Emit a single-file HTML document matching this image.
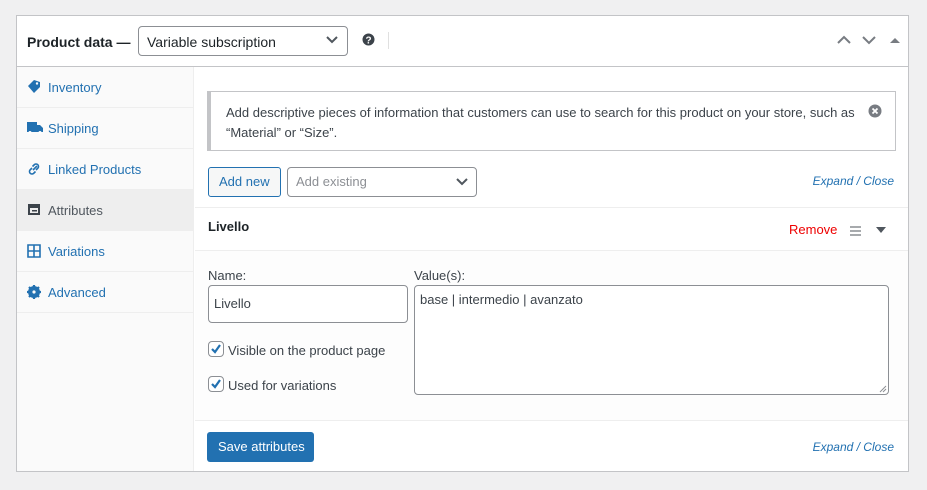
<!DOCTYPE html>
<html><head><meta charset="utf-8"><style>
*{box-sizing:border-box;margin:0;padding:0}
body{width:927px;height:490px;background:#f0f0f1;font-family:"Liberation Sans",sans-serif;font-size:13px;color:#3c434a;position:relative;overflow:hidden}
.a{position:absolute}
.t{position:absolute;white-space:nowrap;line-height:16px}
.box{left:16px;top:15px;width:893px;height:457px;background:#fff;border:1px solid #c3c4c7}
.side{left:17px;top:67px;width:177px;height:404px;background:#fafafa;border-right:1px solid #eee}
.item{position:absolute;left:0;width:177px;height:41px;border-bottom:1px solid #eee;color:#2271b1}
.item span{position:absolute;left:31px;top:13px;line-height:16px}
.item svg{position:absolute;left:10px;top:13px}
.inp{position:absolute;border:1px solid #8c8f94;border-radius:4px;background:#fff}
.cb{position:absolute;width:16px;height:16px;border:1px solid #8c8f94;border-radius:4px;background:#fff}
</style></head><body>
<div class="a box"></div>
<div class="a" style="left:17px;top:66px;width:891px;height:1px;background:#c3c4c7"></div>
<div class="t" style="left:27px;top:34px;font-size:14px;font-weight:bold;color:#1d2327">Product data —</div>
<div class="inp" style="left:138px;top:26px;width:210px;height:30px"></div>
<div class="t" style="left:147px;top:34px;font-size:14px;color:#1d2327">Variable subscription</div>
<svg class="a" style="left:325px;top:35px" width="14" height="10"><path d="M2 2l5 5 5-5" fill="none" stroke="#50575e" stroke-width="2"/></svg>
<svg class="a" style="left:362px;top:33px" width="13" height="13"><circle cx="6.5" cy="6.5" r="6" fill="#3c434a"/><text x="6.5" y="10.5" font-size="10" font-weight="bold" fill="#fff" text-anchor="middle" font-family="Liberation Sans">?</text></svg>
<div class="a" style="left:388px;top:32px;width:1px;height:17px;background:#e0e0e0"></div>
<svg class="a" style="left:836px;top:35px" width="16" height="10"><path d="M2 8l6-6 6 6" fill="none" stroke="#787c82" stroke-width="2"/></svg>
<svg class="a" style="left:861px;top:35px" width="16" height="10"><path d="M2 2l6 6 6-6" fill="none" stroke="#787c82" stroke-width="2"/></svg>
<svg class="a" style="left:890px;top:37px" width="10" height="7"><path d="M0 6l5-5 5 5z" fill="#787c82"/></svg>

<div class="a side">
 <div class="item" style="top:0"><svg width="14" height="14"><path d="M1 6l6-6 6 2 0 5-6 6z" fill="#2271b1"/><circle cx="10" cy="3.5" r="1.2" fill="#fafafa"/></svg><span>Inventory</span></div>
 <div class="item" style="top:41px"><svg width="16" height="14"><path d="M0 1h10v10H0zM10 4h3l3 3v4h-6z" fill="#2271b1"/><circle cx="3" cy="11.5" r="1.5" fill="#fff"/><circle cx="13" cy="11.5" r="1.5" fill="#fff"/></svg><span>Shipping</span></div>
 <div class="item" style="top:82px"><svg width="14" height="14"><path d="M6 8l4-4M5 6l-2 2a2.5 2.5 0 003.5 3.5l2-2M9 8l2-2A2.5 2.5 0 007.5 2.5l-2 2" fill="none" stroke="#2271b1" stroke-width="1.6"/></svg><span>Linked Products</span></div>
 <div class="item" style="top:123px;background:#eee;color:#50575e"><svg width="14" height="14"><rect x="1" y="1" width="12" height="11" fill="#3c434a"/><rect x="3" y="5" width="8" height="5" fill="#eee"/><rect x="5" y="7" width="5" height="1.5" fill="#3c434a"/></svg><span>Attributes</span></div>
 <div class="item" style="top:164px"><svg width="14" height="14"><path d="M1 1h12v12H1zM7 1v12M1 7h12" fill="none" stroke="#2271b1" stroke-width="1.6"/></svg><span>Variations</span></div>
 <div class="item" style="top:205px"><svg width="14" height="14"><circle cx="7" cy="7" r="4.5" fill="none" stroke="#2271b1" stroke-width="3"/><path d="M7 0v14M0 7h14M2 2l10 10M12 2L2 12" stroke="#2271b1" stroke-width="2.2"/><circle cx="7" cy="7" r="1.6" fill="#fafafa"/></svg><span>Advanced</span></div>
</div>

<div class="a" style="left:207px;top:91px;width:689px;height:60px;border:1px solid #c3c4c7;border-left:4px solid #c3c4c7;background:#fff"></div>
<div class="t" style="left:226px;top:103px;line-height:20px;white-space:normal;width:640px">Add descriptive pieces of information that customers can use to search for this product on your store, such as “Material” or “Size”.</div>
<svg class="a" style="left:868px;top:104px" width="14" height="14"><circle cx="7" cy="7" r="6.5" fill="#787c82"/><path d="M4.5 4.5l5 5M9.5 4.5l-5 5" stroke="#fff" stroke-width="1.8"/></svg>

<div class="a" style="left:208px;top:167px;width:73px;height:30px;border:1px solid #2271b1;border-radius:3px;background:#f6f7f7"></div>
<div class="t" style="left:219px;top:174px;color:#2271b1">Add new</div>
<div class="inp" style="left:287px;top:167px;width:190px;height:30px"></div>
<div class="t" style="left:296px;top:174px;color:#8c8f94">Add existing</div>
<svg class="a" style="left:455px;top:177px" width="14" height="10"><path d="M2 2l5 5 5-5" fill="none" stroke="#50575e" stroke-width="2"/></svg>
<div class="t" style="right:33px;top:173px;font-size:12px;font-style:italic;color:#2271b1">Expand / Close</div>

<div class="a" style="left:195px;top:207px;width:713px;height:1px;background:#eee"></div>
<div class="t" style="left:208px;top:219px;font-weight:bold;color:#1d2327">Livello</div>
<div class="t" style="left:789px;top:222px;color:#e00">Remove</div>
<div class="a" style="left:850px;top:226px;width:11px;height:1.5px;background:#a7aaad;box-shadow:0 4px 0 #a7aaad,0 8px 0 #a7aaad"></div>
<svg class="a" style="left:876px;top:227px" width="10" height="7"><path d="M0 0h10L5 6z" fill="#50575e"/></svg>
<div class="a" style="left:195px;top:250px;width:713px;height:171px;background:#fdfdfd;border-top:1px solid #eee;border-bottom:1px solid #eee"></div>

<div class="t" style="left:208px;top:268px">Name:</div>
<div class="inp" style="left:208px;top:285px;width:200px;height:38px"></div>
<div class="t" style="left:214px;top:296px">Livello</div>
<div class="t" style="left:414px;top:268px">Value(s):</div>
<div class="inp" style="left:414px;top:285px;width:475px;height:110px"></div>
<div class="t" style="left:420px;top:292px">base | intermedio | avanzato</div>
<svg class="a" style="left:879px;top:385px" width="8" height="8"><path d="M1 7l6-6M4 7l3-3" stroke="#8c8f94"/></svg>

<div class="cb" style="left:208px;top:341px"></div>
<svg class="a" style="left:209px;top:342px" width="14" height="14"><path d="M3 7l3 3 5-7" fill="none" stroke="#2271b1" stroke-width="2.2"/></svg>
<div class="t" style="left:228px;top:343px">Visible on the product page</div>
<div class="cb" style="left:208px;top:376px"></div>
<svg class="a" style="left:209px;top:377px" width="14" height="14"><path d="M3 7l3 3 5-7" fill="none" stroke="#2271b1" stroke-width="2.2"/></svg>
<div class="t" style="left:228px;top:378px">Used for variations</div>

<div class="a" style="left:207px;top:432px;width:107px;height:30px;background:#2271b1;border-radius:3px"></div>
<div class="t" style="left:218px;top:439px;color:#fff">Save attributes</div>
<div class="t" style="right:33px;top:439px;font-size:12px;font-style:italic;color:#2271b1">Expand / Close</div>
</body></html>
